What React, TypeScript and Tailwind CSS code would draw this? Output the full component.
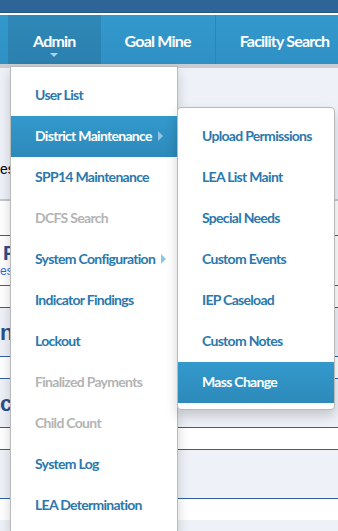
import React from 'react'

type Item = { label: string; disabled?: boolean; active?: boolean; sub?: boolean }

const adminItems: Item[] = [
  { label: 'User List' },
  { label: 'District Maintenance', active: true, sub: true },
  { label: 'SPP14 Maintenance' },
  { label: 'DCFS Search', disabled: true },
  { label: 'System Configuration', sub: true },
  { label: 'Indicator Findings' },
  { label: 'Lockout' },
  { label: 'Finalized Payments', disabled: true },
  { label: 'Child Count', disabled: true },
  { label: 'System Log' },
  { label: 'LEA Determination' },
]

const districtItems: Item[] = [
  { label: 'Upload Permissions' },
  { label: 'LEA List Maint' },
  { label: 'Special Needs' },
  { label: 'Custom Events' },
  { label: 'IEP Caseload' },
  { label: 'Custom Notes' },
  { label: 'Mass Change', active: true },
]

const bgText = "font-['Liberation_Sans',Arial,sans-serif]"

function MenuRow({ item }: { item: Item }) {
  const color = item.active
    ? 'bg-gradient-to-b from-[#3399cc] to-[#2d8aba] text-white'
    : item.disabled
      ? 'text-[#b4b4b4]'
      : 'text-[#2a78ad]'
  return (
    <div className={`h-[41px] flex items-center pl-6 pb-[2px] whitespace-nowrap text-[14px] font-bold tracking-[-0.7px] ${color}`}>
      <span>{item.label}</span>
      {item.sub && (
        <span className="ml-[6px] w-0 h-0 border-y-[5px] border-y-transparent border-l-[5px] border-l-[#8ec5e4]" />
      )}
    </div>
  )
}

// background table rows peeking out behind the menus
function BgRow({ tall, children }: { tall?: boolean; children?: React.ReactNode }) {
  return (
    <div
      className={`${tall ? 'h-[49px] bg-[#eef2f8]' : 'h-[22px] bg-white'} border-b border-[#30619a] flex items-center whitespace-nowrap overflow-hidden`}
    >
      {children}
    </div>
  )
}

export default function App() {
  return (
    <div className="relative w-[338px] h-[531px] overflow-hidden bg-[#eef2f8] font-['Lato',sans-serif]">
      {/* header */}
      <div className="h-[13px] bg-[#2f6499] border-b border-[#28588a]" />
      <div className="h-[2px] bg-white" />
      <nav className="h-[49px] bg-gradient-to-b from-[#3399cc] to-[#2f90c4] flex pl-2 text-white font-bold text-[16px] tracking-[-0.8px] whitespace-nowrap">
        <div className="relative px-[25px] pt-[2px] flex items-center bg-gradient-to-b from-[#2e88b7] to-[#2b80ae]">
          Admin
          <span className="absolute left-1/2 -translate-x-1/2 bottom-[7px] w-0 h-0 border-x-[4px] border-x-transparent border-t-[4px] border-t-[#a9d5ef]" />
        </div>
        <div className="px-6 pt-[2px] flex items-center border-r border-[#2b86b6]">Goal Mine</div>
        <div className="px-6 pt-[2px] flex items-center">Facility Search</div>
      </nav>
      <div className="h-[4px] bg-[#c9ccd2]" />

      {/* page content behind */}
      <div className="h-[133px] bg-[#eef2f8] border-b-2 border-[#c4c7cc] flex items-end pb-[19px]">
        <span className={`whitespace-nowrap text-[14px] text-black ${bgText}`}>es</span>
      </div>
      <div className="h-[35px] bg-white border-b border-[#30619a]" />
      <div className="h-[50px] bg-white border-b border-[#30619a] flex flex-col justify-center pl-[3px]">
        <span className={`whitespace-nowrap text-[20px] leading-5 font-bold text-[#2b4f8c] ${bgText}`}>F</span>
        <span className={`-ml-[3px] whitespace-nowrap text-[12px] leading-4 text-[#1f6fe0] ${bgText}`}>es</span>
      </div>
      <BgRow />
      <BgRow tall>
        <span className={`text-[22px] font-bold text-[#2b4f8c] ${bgText}`}>n</span>
      </BgRow>
      <BgRow />
      <BgRow tall>
        <span className={`text-[22px] font-bold text-[#2b4f8c] ${bgText}`}>c</span>
      </BgRow>
      <BgRow />
      <BgRow tall />
      <div className="h-[21px] bg-white" />

      {/* admin dropdown */}
      <div className="absolute left-[10px] top-[66px] w-[168px] bg-white border border-[#b9b9b9] rounded-b-[4px] shadow-[0_6px_12px_rgba(0,0,0,0.18)] py-2">
        {adminItems.map((item) => (
          <MenuRow key={item.label} item={item} />
        ))}

        {/* district maintenance submenu */}
        <div className="absolute left-[166px] top-[40px] w-[158px] bg-white border border-[#b9b9b9] rounded-[4px] shadow-[0_6px_12px_rgba(0,0,0,0.18)] pt-2 pb-[6px]">
          {districtItems.map((item) => (
            <MenuRow key={item.label} item={item} />
          ))}
        </div>
      </div>
    </div>
  )
}
